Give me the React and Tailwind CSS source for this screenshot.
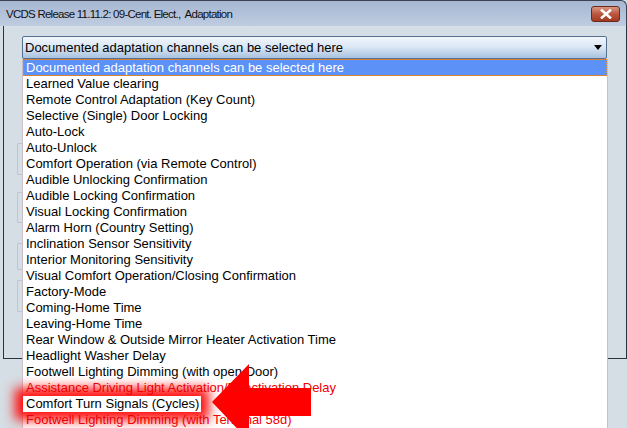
const items = [
  'Documented adaptation channels can be selected here',
  'Learned Value clearing',
  'Remote Control Adaptation (Key Count)',
  'Selective (Single) Door Locking',
  'Auto-Lock',
  'Auto-Unlock',
  'Comfort Operation (via Remote Control)',
  'Audible Unlocking Confirmation',
  'Audible Locking Confirmation',
  'Visual Locking Confirmation',
  'Alarm Horn (Country Setting)',
  'Inclination Sensor Sensitivity',
  'Interior Monitoring Sensitivity',
  'Visual Comfort Operation/Closing Confirmation',
  'Factory-Mode',
  'Coming-Home Time',
  'Leaving-Home Time',
  'Rear Window & Outside Mirror Heater Activation Time',
  'Headlight Washer Delay',
  'Footwell Lighting Dimming (with open Door)',
  'Assistance Driving Light Activation/Deactivation Delay',
  'Comfort Turn Signals (Cycles)',
  'Footwell Lighting Dimming (with Terminal 58d)',
]

// faint group box edges showing behind the list on the left
const brackets = ['top-[117px] h-[32px]', 'top-[166px] h-[31px]', 'top-[217px] h-[27px]', 'top-[254px] h-[32px]']

function Row({ text, index }) {
  if (index === 0) {
    return (
      <div className="h-[17px] bg-[#5c91f7] text-white border border-dotted border-[#e0893a] pl-[2px] leading-[15px]">
        {text}
      </div>
    )
  }
  if (index === 21) {
    return (
      <div className="relative z-10 h-4 leading-4 pl-[3px] w-[178px] bg-white shadow-[0_0_12px_8px_rgba(255,0,0,0.95)]">
        {text}
      </div>
    )
  }
  const red = index === 20 || index === 22
  return (
    <div className={red ? 'relative z-20 h-4 leading-4 pl-[3px] text-[#ee0000]' : 'h-4 leading-4 pl-[3px]'}>
      {text}
    </div>
  )
}

export default function App() {
  return (
    <div className="relative w-[627px] h-[428px] overflow-hidden bg-[#d5dee4] text-[13px] text-black font-['Liberation_Sans',Arial,sans-serif]">
      <div className="h-[26px] flex items-center justify-between pl-[6px] pr-[6px] border-t border-r border-[#3a4250] rounded-tr-[6px] bg-gradient-to-b from-[#a7b7d3] to-[#bfcce0]">
        <span className="text-[11.5px] tracking-[-0.75px] text-[#111] whitespace-pre pt-[2px]">VCDS Release 11.11.2: 09-Cent. Elect.,  Adaptation</span>
        <div className="w-[29px] h-[16px] rounded-[3px] border border-[#6b2a1c] bg-gradient-to-b from-[#d99684] via-[#bb573e] to-[#a33a22] flex items-center justify-center">
          <svg width="12" height="10" viewBox="0 0 12 10">
            <path d="M2 1.5 L10 8.5 M10 1.5 L2 8.5" stroke="#fff" strokeWidth="2.6" strokeLinecap="square" />
          </svg>
        </div>
      </div>

      <div className="absolute left-[3px] right-0 top-[26px] h-[333px] border-l border-r border-b border-[#2a323e]">
        {brackets.map((b, i) => (
          <div key={i} className={'absolute left-[13px] w-[5px] rounded-l-[2px] border-l border-y border-[#bcc6cc] ' + b} />
        ))}
      </div>

      <div className="relative pl-[22px] pr-[20px] pt-[10px]">
        <div className="h-[23px] w-[585px] rounded-[2px] border border-[#55708f] bg-gradient-to-b from-[#f1f6fc] via-[#d9e6f4] to-[#a8c2e1] flex items-center justify-between pl-[2px] pr-[4px]">
          <span>Documented adaptation channels can be selected here</span>
          <svg width="8" height="5" viewBox="0 0 8 5">
            <path d="M0 0 H8 L4 5 Z" fill="#000" />
          </svg>
        </div>
        <div className="w-[586px] h-[400px] bg-white border-l border-r border-[#cbbfc7]">
          {items.map((t, i) => (
            <Row key={i} text={t} index={i} />
          ))}
        </div>
      </div>

      <svg className="absolute left-0 top-0 z-30 pointer-events-none" width="627" height="428" viewBox="0 0 627 428">
        <polygon points="212,402 249,364 249,388 311,388 311,416 249,416 249,441" fill="#ff0000" />
      </svg>
    </div>
  )
}
